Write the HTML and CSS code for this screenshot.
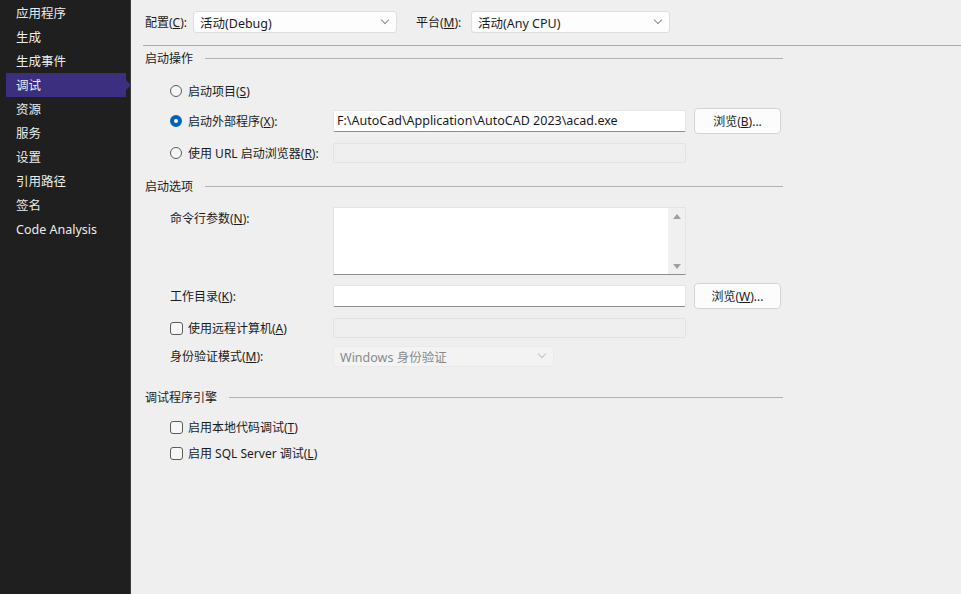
FILE: index.html
```html
<!DOCTYPE html>
<html lang="zh-CN">
<head>
<meta charset="utf-8">
<title>调试</title>
<link rel="stylesheet" href="styles.css">
</head>
<body>
<div class="app">
  <nav class="sidebar">
    <div class="nav-item">应用程序</div>
    <div class="nav-item">生成</div>
    <div class="nav-item">生成事件</div>
    <div class="nav-item active">调试</div>
    <div class="nav-item">资源</div>
    <div class="nav-item">服务</div>
    <div class="nav-item">设置</div>
    <div class="nav-item">引用路径</div>
    <div class="nav-item">签名</div>
    <div class="nav-item">Code Analysis</div>
  </nav>
  <main class="main">
    <div class="toprow">
      <span class="top-label">配置(<u>C</u>):</span>
      <div class="combo combo-config"><span>活动(Debug)</span><span class="chev"></span></div>
      <span class="top-label top-label2">平台(<u>M</u>):</span>
      <div class="combo combo-platform"><span>活动(Any CPU)</span><span class="chev"></span></div>
    </div>
    <div class="full-sep"></div>

    <div class="content">
      <div class="section-head head1"><span>启动操作</span><span class="line"></span></div>

      <div class="row r-radio1">
        <span class="radio"></span><span>启动项目(<u>S</u>)</span>
      </div>
      <div class="row r-radio2">
        <div class="lab"><span class="radio checked"></span><span>启动外部程序(<u>X</u>):</span></div>
        <div class="input">F:\AutoCad\Application\AutoCAD 2023\acad.exe</div>
        <div class="btn">浏览(<u>B</u>)...</div>
      </div>
      <div class="row r-radio3">
        <div class="lab"><span class="radio"></span><span>使用 URL 启动浏览器(<u>R</u>):</span></div>
        <div class="input disabled"></div>
      </div>

      <div class="section-head head2"><span>启动选项</span><span class="line"></span></div>

      <div class="row r-cmd">
        <div class="lab lab-top">命令行参数(<u>N</u>):</div>
        <div class="textarea"><div class="ta-body"></div><div class="ta-scroll"><span class="arr up"></span><span class="arr down"></span></div></div>
      </div>
      <div class="row r-work">
        <div class="lab">工作目录(<u>K</u>):</div>
        <div class="input"></div>
        <div class="btn">浏览(<u>W</u>)...</div>
      </div>
      <div class="row r-remote">
        <div class="lab"><span class="check"></span><span>使用远程计算机(<u>A</u>)</span></div>
        <div class="input disabled"></div>
      </div>
      <div class="row r-auth">
        <div class="lab">身份验证模式(<u>M</u>):</div>
        <div class="combo combo-auth disabled-combo"><span>Windows 身份验证</span><span class="chev"></span></div>
      </div>

      <div class="section-head head3"><span>调试程序引擎</span><span class="line"></span></div>

      <div class="row r-cb1">
        <span class="check"></span><span>启用本地代码调试(<u>T</u>)</span>
      </div>
      <div class="row r-cb2">
        <span class="check"></span><span>启用 SQL Server 调试(<u>L</u>)</span>
      </div>
    </div>
  </main>
</div>
</body>
</html>
```

FILE: styles.css
```css
html, body {
  margin: 0;
  padding: 0;
  height: 100%;
}
body {
  font-family: "Noto Sans", "Noto Sans CJK SC", sans-serif;
  font-size: 12px;
  color: #1b1b1b;
  background: #efefef;
  overflow: hidden;
}
u { text-decoration: underline; text-underline-offset: 1px; }

.app {
  display: flex;
  height: 594px;
}

/* Sidebar */
.sidebar {
  width: 131px;
  flex: 0 0 131px;
  background: #1f1f1f;
  border-right: 1px solid #3c3c3c;
  padding-top: 1px;
  box-sizing: border-box;
}
.nav-item {
  position: relative;
  height: 24px;
  line-height: 26px;
  margin-left: 6px;
  width: 120px;
  padding-left: 10px;
  box-sizing: border-box;
  color: #ececec;
  font-size: 12.5px;
  white-space: nowrap;
}
.nav-item.active {
  background: #3c2f80;
}
.nav-item.active::after {
  content: "";
  position: absolute;
  right: -5px;
  top: 7px;
  border-top: 5px solid transparent;
  border-bottom: 5px solid transparent;
  border-left: 5px solid #3c2f80;
}

/* Main */
.main {
  flex: 1;
  background: #efefef;
  padding-left: 12px;
  box-sizing: border-box;
}
.toprow {
  display: flex;
  align-items: center;
  height: 22px;
  margin-top: 11px;
  padding-left: 2px;
}
.top-label {
  width: 48px;
  flex: 0 0 48px;
  white-space: nowrap;
}
.top-label2 {
  margin-left: 19px;
  width: 55px;
  flex: 0 0 55px;
}
.combo {
  display: flex;
  align-items: center;
  justify-content: space-between;
  height: 22px;
  box-sizing: border-box;
  background: #fdfdfd;
  border: 1px solid #dedede;
  border-radius: 3px;
  padding: 0 6px 0 6px;
  font-size: 12.5px;
  white-space: nowrap;
}
.combo-config { width: 204px; }
.combo-platform { width: 199px; }
.chev {
  width: 5px;
  height: 5px;
  border-right: 1px solid #8a8a8a;
  border-bottom: 1px solid #8a8a8a;
  transform: rotate(45deg);
  margin-top: -4px;
  margin-right: 2px;
}
.full-sep {
  height: 1px;
  background: #a9a9a9;
  margin-top: 12px;
}

.content {
  width: 640px;
}
.section-head {
  display: flex;
  align-items: center;
  height: 20px;
  padding-left: 2px;
}
.section-head .line {
  flex: 1;
  height: 1px;
  background: #b2b2b2;
  margin-left: 12px;
}
.head1 { margin-top: 2px; }
.head2 { margin-top: 12px; }
.head3 { margin-top: 20px; }

.row {
  display: flex;
  align-items: center;
  padding-left: 27px;
}
.lab {
  width: 163px;
  display: flex;
  align-items: center;
  flex: 0 0 163px;
  white-space: nowrap;
}
.lab-top {
  align-self: flex-start;
  padding-top: 2px;
}
.r-radio1 { height: 22px; margin-top: 12px; }
.r-radio2 { height: 26px; margin-top: 6px; }
.r-radio3 { height: 22px; margin-top: 8px; }
.r-cmd { margin-top: 11px; align-items: flex-start; }
.r-work { height: 26px; margin-top: 8px; }
.r-remote { height: 22px; margin-top: 8px; }
.r-auth { height: 22px; margin-top: 6px; }
.r-cb1 { height: 22px; margin-top: 9px; }
.r-cb2 { height: 22px; margin-top: 4px; }

.radio {
  width: 12px;
  height: 12px;
  border: 1px solid #5c5c5c;
  border-radius: 50%;
  box-sizing: border-box;
  background: #f6f6f6;
  margin-right: 6px;
  flex: 0 0 12px;
}
.radio.checked {
  border: 4px solid #0063b8;
  background: #ffffff;
}
.check {
  width: 13px;
  height: 13px;
  border: 1px solid #5c5c5c;
  border-radius: 3px;
  box-sizing: border-box;
  background: #f6f6f6;
  margin-right: 5px;
  flex: 0 0 13px;
}

.input {
  width: 353px;
  height: 22px;
  box-sizing: border-box;
  background: #ffffff;
  border: 1px solid #e4e4e4;
  border-bottom: 1px solid #8d8d8d;
  border-radius: 2px;
  padding: 0 3px;
  line-height: 20px;
  font-size: 12.5px;
  white-space: nowrap;
  overflow: hidden;
}
.input.disabled {
  height: 20px;
  background: #efefef;
  border: 1px solid #e2e2e2;
}
.btn {
  width: 87px;
  height: 26px;
  box-sizing: border-box;
  margin-left: 8px;
  background: #fcfcfc;
  border: 1px solid #d3d3d3;
  border-radius: 4px;
  display: flex;
  align-items: center;
  justify-content: center;
}

.textarea {
  width: 353px;
  height: 68px;
  box-sizing: border-box;
  background: #ffffff;
  border: 1px solid #e4e4e4;
  border-bottom: 1px solid #8d8d8d;
  display: flex;
}
.ta-body { flex: 1; }
.ta-scroll {
  width: 17px;
  background: #f0f0f0;
  display: flex;
  flex-direction: column;
  justify-content: space-between;
  align-items: center;
  padding: 6px 0 5px;
  box-sizing: border-box;
}
.arr {
  width: 0;
  height: 0;
  border-left: 4px solid transparent;
  border-right: 4px solid transparent;
}
.arr.up { border-bottom: 5px solid #a0a0a0; }
.arr.down { border-top: 5px solid #a0a0a0; }

.combo-auth {
  width: 221px;
  height: 21px;
}
.disabled-combo {
  background: #f3f3f3;
  border: 1px solid #eaeaea;
  color: #8a8a8a;
}
.disabled-combo .chev {
  border-color: #c4c4c4;
}
```
